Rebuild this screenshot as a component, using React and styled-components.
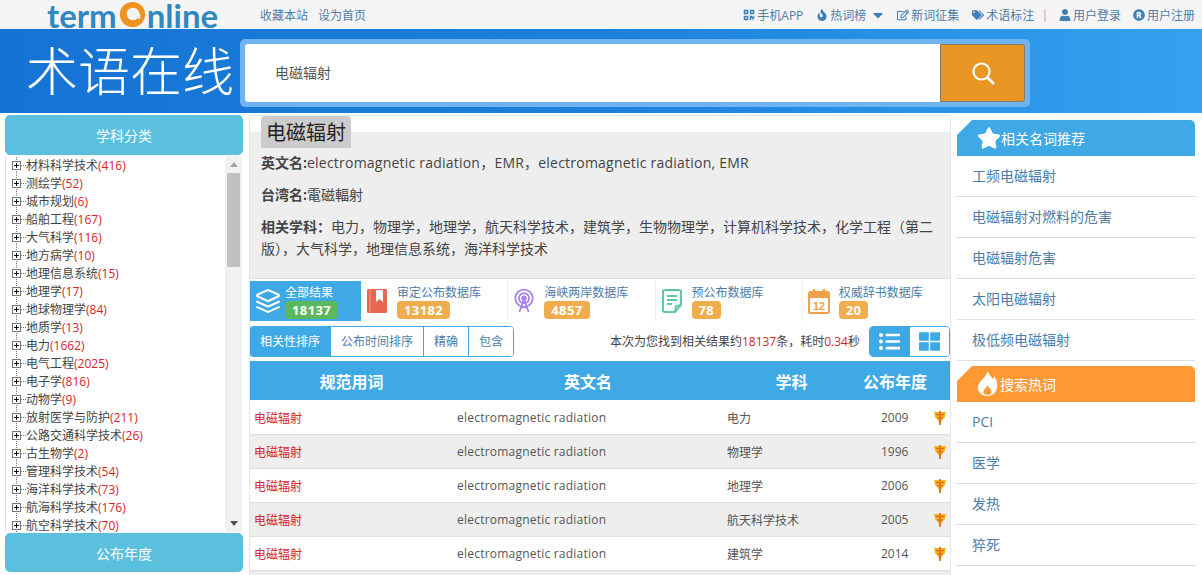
import React from 'react';
import styled, { createGlobalStyle } from 'styled-components';
import { FaQrcode, FaFire, FaCaretDown, FaRegEdit, FaTags, FaUser, FaRegistered, FaStar, FaListUl, FaThLarge } from 'react-icons/fa';
import { LuLayers } from 'react-icons/lu';

const BLUE = '#3fa9e5';
const LINK = '#4d7ca8';
const FONT = '"Open Sans", "Noto Sans CJK SC", sans-serif';

const GlobalStyle = createGlobalStyle`
  html, body {
    margin: 0;
    height: 575px;
    overflow: hidden;
    background: #fff;
    font-family: ${FONT};
    font-size: 12px;
    color: #444;
  }
  * { box-sizing: border-box; }
`;

const TopBar = styled.div`
  height: 29px;
  background: #f5f5f5;
  display: flex;
  align-items: center;
  padding: 0 7px 0 47px;
`;
const Logo = styled.div`
  width: 213px;
  height: 29px;
  display: flex;
  align-items: center;
  font-family: Lato, sans-serif;
  font-weight: 700;
  font-size: 33px;
  line-height: 26px;
  color: #2f88c2;
`;
const LeftNav = styled.div`
  display: flex;
  gap: 10px;
`;
const RightNav = styled.div`
  margin-left: auto;
  display: flex;
  align-items: center;
`;
const NavLink = styled.a`
  display: inline-flex;
  align-items: center;
  gap: 2px;
  color: ${LINK};
  margin-left: ${(p) => p.$gap || 0}px;
  white-space: nowrap;
  svg { font-size: 12px; color: #3f7fb5; }
`;
const NavSep = styled.span`
  margin-left: 7px;
  color: #9ab;
`;

const Hero = styled.div`
  height: 84px;
  background: linear-gradient(90deg, #1573d3 0%, #1c80dc 50%, #34a2ef 100%);
  display: flex;
  align-items: center;
  padding: 4px 0 0 26px;
`;
const HeroTitle = styled.div`
  width: 214px;
  margin-top: -4px;
  font-size: 52px;
  line-height: 80px;
  font-weight: 300;
  color: #fff;
  white-space: nowrap;
`;
const SearchBox = styled.div`
  width: 790px;
  height: 68px;
  padding: 5px;
  background: #6fb3f0;
  border-radius: 5px;
  display: flex;
`;
const SearchInput = styled.div`
  flex: 1;
  background: #fff;
  border-radius: 3px 0 0 3px;
  font-size: 14px;
  line-height: 58px;
  padding-left: 30px;
  color: #555;
`;
const SearchButton = styled.div`
  width: 85px;
  background: #e99524;
  border: 1px solid #8a7a60;
  border-radius: 0 3px 3px 0;
  display: flex;
  align-items: center;
  justify-content: center;
`;

const Main = styled.div`
  display: grid;
  grid-template-columns: 238px 702px 238px;
  column-gap: 6px;
  padding: 2px 0 0 5px;
  align-items: start;
`;

const SideHead = styled.div`
  height: ${(p) => p.$h}px;
  background: #5bc0de;
  border-radius: 5px;
  color: #fff;
  font-size: 14px;
  display: flex;
  align-items: center;
  justify-content: center;
`;
const TreeBox = styled.div`
  height: 376px;
  margin: 1px 0 1px;
  border-left: 1px solid #e3e3e3;
  display: flex;
  overflow: hidden;
`;
const TreeList = styled.ul`
  flex: 1;
  list-style: none;
  margin: 0;
  padding: 1px 0 0 5px;
`;
const TreeItem = styled.li`
  height: 18px;
  display: flex;
  align-items: center;
  line-height: 18px;
  white-space: nowrap;
  color: #444;
  svg { margin-right: -1px; }
`;
const Count = styled.span`
  color: #d8232a;
`;
const Rail = styled.div`
  width: 17px;
  margin-right: 1px;
  background: #f1f1f1;
  display: flex;
  flex-direction: column;
  align-items: center;
  padding-top: 6px;
`;
const Thumb = styled.div`
  width: 13px;
  height: 94px;
  margin-top: 6px;
  background: #c1c1c1;
`;
const RailArrow = styled.div`
  width: 0;
  height: 0;
  border-left: 4px solid transparent;
  border-right: 4px solid transparent;
  border-bottom: ${(p) => (p.$down ? 0 : '5px solid #a3a3a3')};
  border-top: ${(p) => (p.$down ? '5px solid #505050' : 0)};
  margin-top: ${(p) => (p.$down ? 'auto' : 0)};
  margin-bottom: ${(p) => (p.$down ? '6px' : 0)};
`;

const Center = styled.div`
  border: 1px solid #e8e8e8;
  border-bottom: 0;
  border-radius: 4px 4px 0 0;
  height: 460px;
  overflow: hidden;
  background: #fff;
`;
const TermTitle = styled.h2`
  position: relative;
  width: fit-content;
  margin: 0 0 -16px 11px;
  padding: 0 5px;
  height: 32px;
  line-height: 34px;
  font-size: 20px;
  font-weight: 400;
  color: #222;
  background: #ccc;
  border-radius: 4px 4px 0 0;
`;
const InfoBox = styled.div`
  background: #eee;
  height: 147px;
  padding: 20px 11px 0;
  font-size: 14px;
  line-height: 22px;
  color: #444;
  border-bottom: 1px solid #ddd;
`;
const InfoLine = styled.div`
  margin-bottom: 10px;
`;
const InfoLabel = styled.b`
  font-weight: 700;
`;
const Latin = styled.span`
  letter-spacing: 0.22px;
`;

const Tabs = styled.div`
  display: grid;
  grid-template-columns: 111px repeat(4, 147.25px);
  margin-top: 2px;
  height: 40px;
`;
const Tab = styled.div`
  display: flex;
  gap: ${(p) => (p.$active ? 4 : 9)}px;
  align-items: center;
  padding-left: 5px;
  background: ${(p) => (p.$active ? BLUE : '#fff')};
  color: ${(p) => (p.$active ? '#fff' : LINK)};
  border-right: ${(p) => (p.$active ? 0 : '1px solid #eee')};
  &:last-child { border-right: 0; }
  svg { flex: none; }
`;
const TabText = styled.div`
  line-height: 17px;
  white-space: nowrap;
`;
const Badge = styled.span`
  display: inline-block;
  min-width: 29px;
  height: 18px;
  padding: 0 7px;
  line-height: 18px;
  border-radius: 4px;
  font-weight: 700;
  font-size: 13px;
  letter-spacing: 0.4px;
  text-align: center;
  color: #fff;
  background: ${(p) => (p.$green ? '#5cb85c' : '#f0ad4e')};
`;

const Toolbar = styled.div`
  display: flex;
  align-items: flex-start;
  height: 31px;
  margin: 5px 0 4px -1px;
`;
const SortGroup = styled.div`
  display: flex;
  height: 31px;
  border: 1px solid ${BLUE};
  border-radius: 4px;
  overflow: hidden;
`;
const SortButton = styled.div`
  padding: 0 10px;
  line-height: 29px;
  color: ${(p) => (p.$active ? '#fff' : LINK)};
  background: ${(p) => (p.$active ? BLUE : '#fff')};
  border-left: ${(p) => (p.$first ? 0 : `1px solid ${BLUE}`)};
`;
const ResultNote = styled.div`
  margin-left: auto;
  margin-right: 9px;
  line-height: 31px;
  color: #444;
  white-space: nowrap;
`;
const Red = styled.span`
  color: #d8232a;
`;
const ViewToggle = styled.div`
  display: flex;
  width: 81px;
  height: 31px;
  border: 1px solid ${BLUE};
  border-radius: 4px;
  overflow: hidden;
`;
const ViewButton = styled.div`
  flex: 1;
  display: flex;
  align-items: center;
  justify-content: center;
  font-size: 21px;
  color: ${(p) => (p.$active ? '#fff' : BLUE)};
  background: ${(p) => (p.$active ? BLUE : '#fff')};
`;

const COLUMNS = '203px 270px 137px 70px 20px';
const TableHead = styled.div`
  display: grid;
  grid-template-columns: ${COLUMNS};
  height: 39px;
  align-items: center;
  background: ${BLUE};
  color: #fff;
  font-size: 16px;
  font-weight: 700;
  text-align: center;
  margin-bottom: 1px;
`;
const Row = styled.div`
  display: grid;
  grid-template-columns: ${COLUMNS};
  height: 34px;
  align-items: center;
  color: #555;
  background: ${(p) => (p.$odd ? '#eee' : '#fff')};
  border-bottom: 1px solid #ddd;
`;
const TableEnd = styled.div`
  height: 10px;
  background: #eee;
`;
const TermCell = styled.div`
  padding-left: 4px;
  color: #d8232a;
`;
const PlainCell = styled.div`
  padding-left: ${(p) => p.$pad || 4}px;
`;
const IconCell = styled.div`
  display: flex;
  justify-content: center;
`;

const SideCard = styled.div`
  margin-top: ${(p) => p.$top}px;
`;
const CardHead = styled.div`
  height: 36px;
  display: flex;
  align-items: center;
  padding-left: 20px;
  color: #fff;
  font-size: 14px;
  background: ${(p) => p.$color};
  border-radius: 0 5px 0 0;
  clip-path: polygon(15px 0, 100% 0, 100% 100%, 0 100%, 0 15px);
`;
const CardItem = styled.div`
  height: 41px;
  padding-left: 15px;
  line-height: 40px;
  font-size: 14px;
  color: ${LINK};
  border-bottom: 1px solid #ddd;
  white-space: nowrap;
`;

const TREE = [
  ['材料科学技术', 416], ['测绘学', 52], ['城市规划', 6], ['船舶工程', 167], ['大气科学', 116],
  ['地方病学', 10], ['地理信息系统', 15], ['地理学', 17], ['地球物理学', 84], ['地质学', 13],
  ['电力', 1662], ['电气工程', 2025], ['电子学', 816], ['动物学', 9], ['放射医学与防护', 211],
  ['公路交通科学技术', 26], ['古生物学', 2], ['管理科学技术', 54], ['海洋科学技术', 73],
  ['航海科学技术', 176], ['航空科学技术', 70],
];

const ROWS = [
  ['电力', 2009], ['物理学', 1996], ['地理学', 2006], ['航天科学技术', 2005], ['建筑学', 2014],
];

const RELATED = ['工频电磁辐射', '电磁辐射对燃料的危害', '电磁辐射危害', '太阳电磁辐射', '极低频电磁辐射'];
const HOT = ['PCI', '医学', '发热', '猝死'];

const LogoO = () => (
  <svg width="29" height="29" viewBox="0 0 30 30" style={{ margin: '0 0 0 1px' }}>
    <circle cx="15" cy="15" r="13" fill="#ee9222" />
    <circle cx="15.5" cy="14.5" r="6.5" fill="#f5f5f5" />
    <path d="M22 14.5v5" stroke="#f5f5f5" strokeWidth="2" />
  </svg>
);

const TreeNode = () => (
  <svg width="16" height="18" viewBox="0 0 16 18" style={{ flex: 'none' }}>
    <path d="M5.5 0v18M10 8.5h6" stroke="#777" strokeDasharray="1 1" fill="none" />
    <rect x="1.5" y="4.5" width="8" height="8" fill="#fff" stroke="#777" />
    <path d="M3 8.5h5M5.5 6v5" stroke="#111" fill="none" />
  </svg>
);

const SearchGlass = () => (
  <svg width="26" height="26" viewBox="0 0 26 26" fill="none" stroke="#fff" strokeWidth="2.2">
    <circle cx="11.5" cy="11.5" r="8" />
    <path d="M17.5 17.5l6.500 6.500" strokeWidth="2.600" />
  </svg>
);

const BookIcon = () => (
  <svg width="22" height="26" viewBox="0 0 22 26">
    <rect x="1" y="1" width="20" height="24" rx="1.5" fill="#e8654f" />
    <path d="M4 1v24" stroke="#f3a090" />
    <path d="M10 2h7v12l-3.500-3-3.500 3z" fill="#fff" />
  </svg>
);

const TowerIcon = () => (
  <svg width="22" height="26" viewBox="0 0 24 28" fill="none" stroke="#a586ea" strokeWidth="2">
    <circle cx="12" cy="11" r="9.500" />
    <circle cx="12" cy="11" r="5.500" />
    <circle cx="12" cy="11" r="2" fill="#a586ea" />
    <path d="M12 12L7 26M12 12l5 14M9 21h6" />
  </svg>
);

const NoteIcon = () => (
  <svg width="22" height="26" viewBox="0 0 22 26" fill="none" stroke="#5fc9a0" strokeWidth="2">
    <path d="M14 24H4a2 2 0 0 1-2-2V4a2 2 0 0 1 2-2h14a2 2 0 0 1 2 2v13z" />
    <path d="M6 8h10M6 12h10M6 16h5" />
    <path d="M14 24l1-6 5-1" />
  </svg>
);

const CalendarIcon = () => (
  <svg width="22" height="26" viewBox="0 0 22 26">
    <rect x="1" y="4" width="20" height="21" rx="1.500" fill="#fff" stroke="#f0a04b" strokeWidth="2" />
    <rect x="1" y="4" width="20" height="6" fill="#f0a04b" />
    <path d="M6 1v6M16 1v6" stroke="#f0a04b" strokeWidth="2.500" />
    <text x="11" y="22" textAnchor="middle" fontSize="11" fontWeight="700" fill="#f0a04b" fontFamily="Liberation Sans, sans-serif">12</text>
  </svg>
);

const TermMark = () => (
  <svg width="14" height="16" viewBox="0 0 14 16">
    <path d="M1 2h12l-1 5-3 3-2 5-2-5-3-3z" fill="#f6b51d" />
    <path d="M7 1v14M3 4.500h8M4 8h6" stroke="#e36f1a" strokeWidth="1.700" fill="none" />
  </svg>
);

const FlameIcon = () => (
  <svg width="21" height="26" viewBox="0 0 21 26" fill="#fff" style={{ marginRight: 2 }}>
    <path d="M11 0c1 4 3 5 5 8 1-1 1-2 1-3 3 4 4 8 3 12-1 5-5 8-9.500 8S1 22 .8 17C.5 11 8 8 11 0zm-.500 14c-1 3-4 4-4 7 0 2 2 3 4 3s4-1 4-3c0-3-3-4-4-7z" fillRule="evenodd" />
  </svg>
);

export default function App() {
  return (
    <>
      <GlobalStyle />
      <TopBar>
        <Logo>term<LogoO />nline</Logo>
        <LeftNav>
          <NavLink>收藏本站</NavLink>
          <NavLink>设为首页</NavLink>
        </LeftNav>
        <RightNav>
          <NavLink><FaQrcode />手机APP</NavLink>
          <NavLink $gap={13}><FaFire />热词榜<FaCaretDown style={{ fontSize: 16, marginLeft: 2 }} /></NavLink>
          <NavLink $gap={11}><FaRegEdit />新词征集</NavLink>
          <NavLink $gap={13}><FaTags />术语标注</NavLink>
          <NavSep>|</NavSep>
          <NavLink $gap={11}><FaUser />用户登录</NavLink>
          <NavLink $gap={12}><FaRegistered />用户注册</NavLink>
        </RightNav>
      </TopBar>

      <Hero>
        <HeroTitle>术语在线</HeroTitle>
        <SearchBox>
          <SearchInput>电磁辐射</SearchInput>
          <SearchButton><SearchGlass /></SearchButton>
        </SearchBox>
      </Hero>

      <Main>
        <div>
          <SideHead $h={40}>学科分类</SideHead>
          <TreeBox>
            <TreeList>
              {TREE.map(([name, count]) => (
                <TreeItem key={name}>
                  <TreeNode />
                  {name}<Count>({count})</Count>
                </TreeItem>
              ))}
            </TreeList>
            <Rail>
              <RailArrow />
              <Thumb />
              <RailArrow $down />
            </Rail>
          </TreeBox>
          <SideHead $h={39}>公布年度</SideHead>
        </div>

        <Center>
          <TermTitle>电磁辐射</TermTitle>
          <InfoBox>
            <InfoLine><InfoLabel>英文名:</InfoLabel><Latin>electromagnetic radiation，EMR，electromagnetic radiation, EMR</Latin></InfoLine>
            <InfoLine><InfoLabel>台湾名:</InfoLabel>電磁輻射</InfoLine>
            <InfoLine><InfoLabel>相关学科：</InfoLabel>电力，物理学，地理学，航天科学技术，建筑学，生物物理学，计算机科学技术，化学工程（第二版），大气科学，地理信息系统，海洋科学技术</InfoLine>
          </InfoBox>

          <Tabs>
            <Tab $active>
              <LuLayers size={26} color="#fff" />
              <TabText>全部结果<br /><Badge $green>18137</Badge></TabText>
            </Tab>
            <Tab><BookIcon /><TabText>审定公布数据库<br /><Badge>13182</Badge></TabText></Tab>
            <Tab><TowerIcon /><TabText>海峡两岸数据库<br /><Badge>4857</Badge></TabText></Tab>
            <Tab><NoteIcon /><TabText>预公布数据库<br /><Badge>78</Badge></TabText></Tab>
            <Tab><CalendarIcon /><TabText>权威辞书数据库<br /><Badge>20</Badge></TabText></Tab>
          </Tabs>

          <Toolbar>
            <SortGroup>
              <SortButton $active $first>相关性排序</SortButton>
              <SortButton>公布时间排序</SortButton>
              <SortButton>精确</SortButton>
              <SortButton>包含</SortButton>
            </SortGroup>
            <ResultNote>本次为您找到相关结果约<Red>18137</Red>条，耗时<Red>0.34</Red>秒</ResultNote>
            <ViewToggle>
              <ViewButton $active><FaListUl /></ViewButton>
              <ViewButton><FaThLarge /></ViewButton>
            </ViewToggle>
          </Toolbar>

          <TableHead>
            <div>规范用词</div>
            <div>英文名</div>
            <div>学科</div>
            <div>公布年度</div>
            <div />
          </TableHead>
          {ROWS.map(([subject, year], i) => (
            <Row key={subject} $odd={i % 2 === 1}>
              <TermCell>电磁辐射</TermCell>
              <PlainCell><Latin>electromagnetic radiation</Latin></PlainCell>
              <PlainCell>{subject}</PlainCell>
              <PlainCell $pad={21}>{year}</PlainCell>
              <IconCell><TermMark /></IconCell>
            </Row>
          ))}
          <TableEnd />
        </Center>

        <div>
          <SideCard $top={5}>
            <CardHead $color={BLUE}><FaStar size={24} />相关名词推荐</CardHead>
            {RELATED.map((t) => <CardItem key={t}>{t}</CardItem>)}
          </SideCard>
          <SideCard $top={5}>
            <CardHead $color="#ff9933"><FlameIcon />搜索热词</CardHead>
            {HOT.map((t) => <CardItem key={t}>{t}</CardItem>)}
          </SideCard>
        </div>
      </Main>
    </>
  );
}
